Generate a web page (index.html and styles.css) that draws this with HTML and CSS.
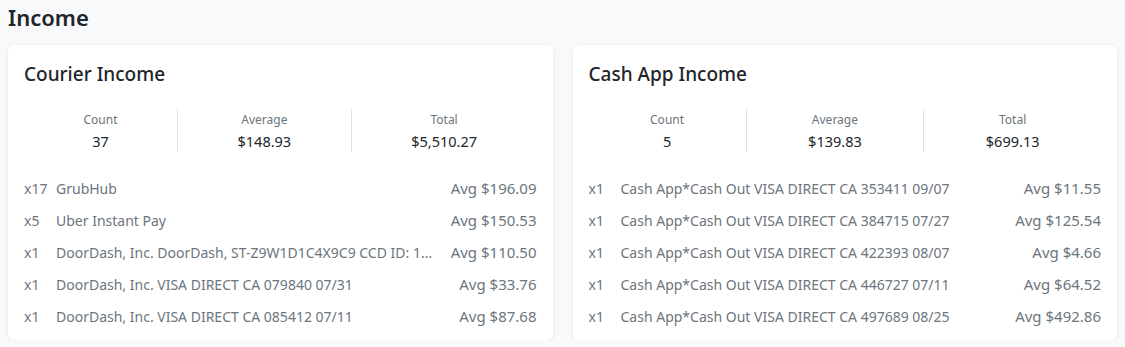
FILE: index.html
```html
<!DOCTYPE html>
<html>
<head>
<meta charset="utf-8">
<link rel="stylesheet" href="styles.css">
</head>
<body>
<main class="page">
  <h2 class="page-title">Income</h2>
  <div class="cards">
    <section class="card">
      <h3 class="card-title">Courier Income</h3>
      <div class="stats">
        <div class="stat"><div class="stat-label">Count</div><div class="stat-value">37</div></div>
        <div class="stat"><div class="stat-label">Average</div><div class="stat-value">$148.93</div></div>
        <div class="stat"><div class="stat-label">Total</div><div class="stat-value">$5,510.27</div></div>
      </div>
      <ul class="rows">
        <li class="row"><span class="cnt">x17</span><span class="name">GrubHub</span><span class="avg">Avg $196.09</span></li>
        <li class="row"><span class="cnt">x5</span><span class="name">Uber Instant Pay</span><span class="avg">Avg $150.53</span></li>
        <li class="row"><span class="cnt">x1</span><span class="name">DoorDash, Inc. DoorDash, ST-Z9W1D1C4X9C9 CCD ID: 1234567890</span><span class="avg">Avg $110.50</span></li>
        <li class="row"><span class="cnt">x1</span><span class="name">DoorDash, Inc. VISA DIRECT CA 079840 07/31</span><span class="avg">Avg $33.76</span></li>
        <li class="row"><span class="cnt">x1</span><span class="name">DoorDash, Inc. VISA DIRECT CA 085412 07/11</span><span class="avg">Avg $87.68</span></li>
      </ul>
    </section>
    <section class="card">
      <h3 class="card-title">Cash App Income</h3>
      <div class="stats">
        <div class="stat"><div class="stat-label">Count</div><div class="stat-value">5</div></div>
        <div class="stat"><div class="stat-label">Average</div><div class="stat-value">$139.83</div></div>
        <div class="stat"><div class="stat-label">Total</div><div class="stat-value">$699.13</div></div>
      </div>
      <ul class="rows">
        <li class="row"><span class="cnt">x1</span><span class="name">Cash App*Cash Out VISA DIRECT CA 353411 09/07</span><span class="avg">Avg $11.55</span></li>
        <li class="row"><span class="cnt">x1</span><span class="name">Cash App*Cash Out VISA DIRECT CA 384715 07/27</span><span class="avg">Avg $125.54</span></li>
        <li class="row"><span class="cnt">x1</span><span class="name">Cash App*Cash Out VISA DIRECT CA 422393 08/07</span><span class="avg">Avg $4.66</span></li>
        <li class="row"><span class="cnt">x1</span><span class="name">Cash App*Cash Out VISA DIRECT CA 446727 07/11</span><span class="avg">Avg $64.52</span></li>
        <li class="row"><span class="cnt">x1</span><span class="name">Cash App*Cash Out VISA DIRECT CA 497689 08/25</span><span class="avg">Avg $492.86</span></li>
      </ul>
    </section>
  </div>
</main>
</body>
</html>
```
FILE: styles.css
```css
* { box-sizing: border-box; }
html, body { margin: 0; padding: 0; }
body {
  background: #f8f9fa;
  font-family: "Noto Sans", "Open Sans", sans-serif;
  color: #212529;
}
.page { padding: 2px 8px 0; }
.page-title {
  margin: 0;
  font-size: 22px;
  line-height: 30px;
  font-weight: 600;
  color: #212529;
}
.cards {
  margin-top: 13px;
  display: grid;
  grid-template-columns: 1fr 1fr;
  gap: 20px;
}
.card {
  background: #fff;
  border-radius: 6px;
  box-shadow: 0 1px 4px rgba(0,0,0,0.08);
  padding: 16px 16px 8px;
  min-width: 0;
}
.card-title {
  margin: 0;
  font-size: 19px;
  line-height: 26px;
  font-weight: 500;
  color: #212529;
}
.stats {
  display: flex;
  margin-top: 22px;
}
.stat {
  flex: 1 1 auto;
  text-align: center;
  border-left: 1px solid #dee2e6;
}
.stat:first-child { border-left: none; }
.stat-label {
  font-size: 12px;
  line-height: 21px;
  color: #6c757d;
}
.stat-value {
  font-size: 14.5px;
  line-height: 22px;
  color: #212529;
}
.rows {
  list-style: none;
  margin: 20px 0 0;
  padding: 0;
}
.row {
  display: flex;
  align-items: center;
  height: 32px;
  font-size: 14px;
  color: #6c757d;
}
.cnt { flex: 0 0 32px; }
.name {
  flex: 1 1 auto;
  min-width: 0;
  overflow: hidden;
  white-space: nowrap;
  text-overflow: ellipsis;
}
.avg {
  flex: 0 0 auto;
  margin-left: 12px;
  font-size: 15px;
  text-align: right;
}
```
